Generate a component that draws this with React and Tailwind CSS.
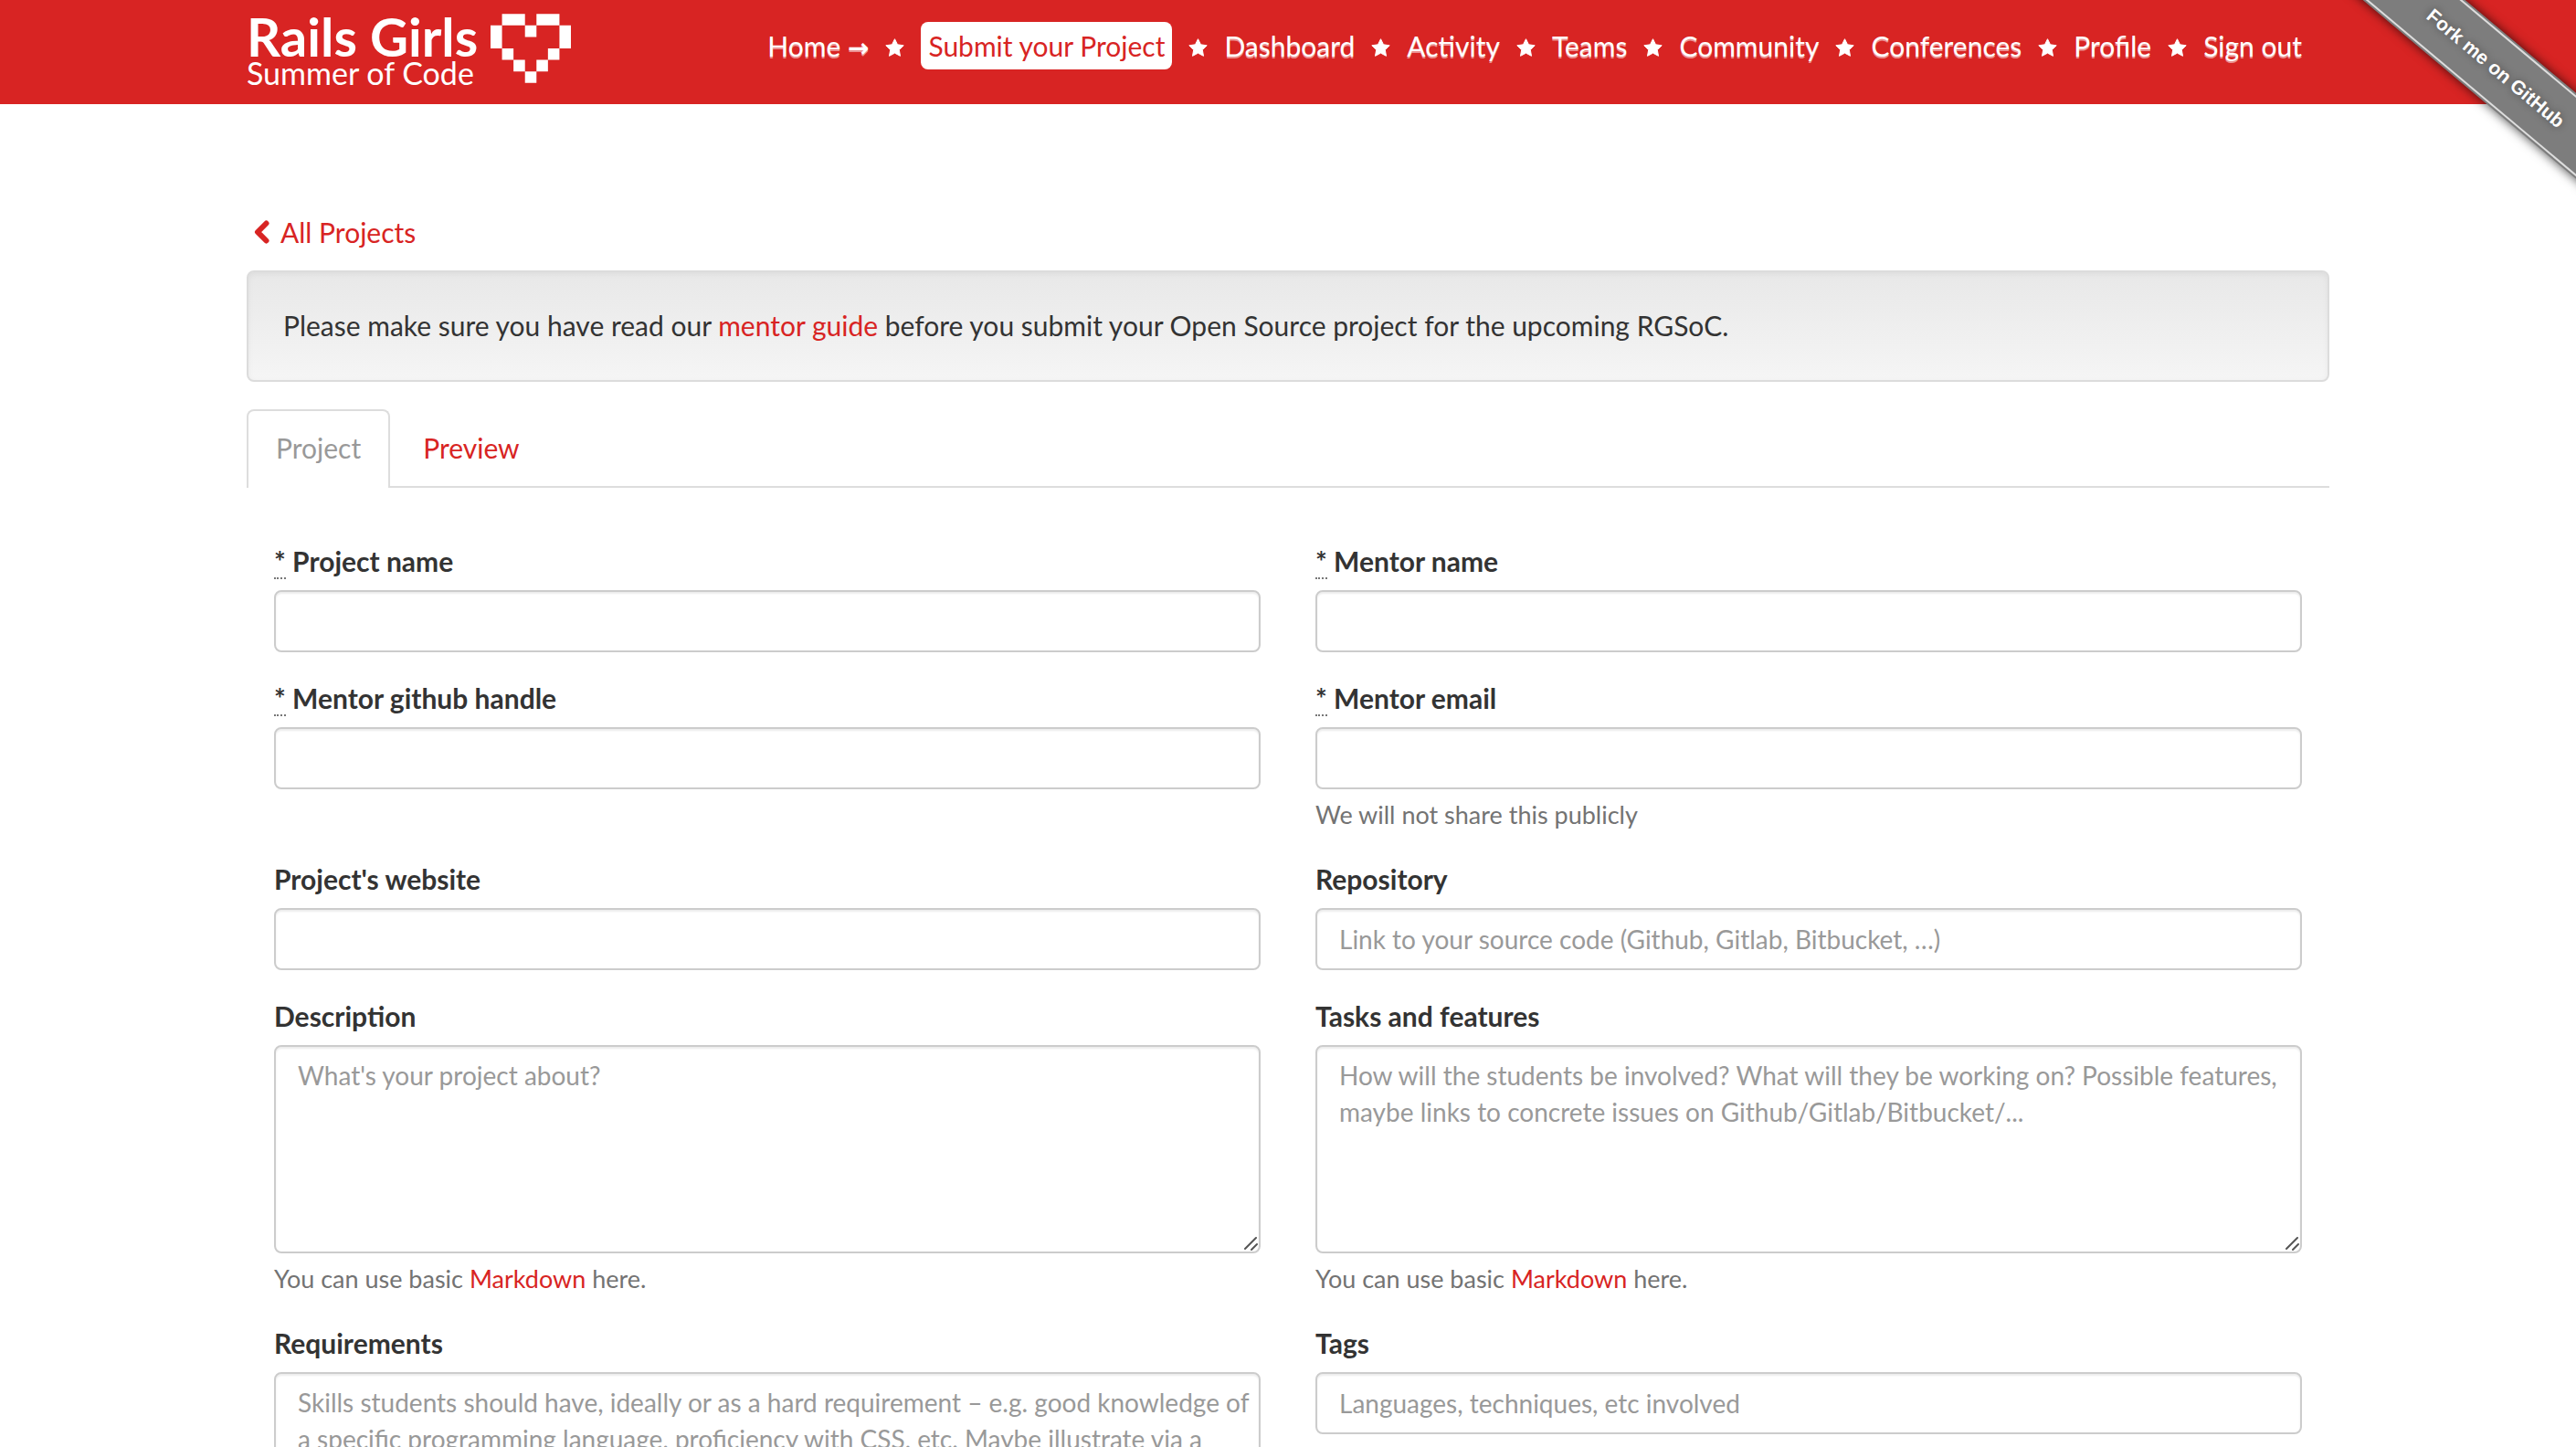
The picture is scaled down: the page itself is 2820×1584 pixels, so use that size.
import React, { Fragment } from "react";

const NAV = [
  "Home",
  "Submit your Project",
  "Dashboard",
  "Activity",
  "Teams",
  "Community",
  "Conferences",
  "Profile",
  "Sign out",
];

const LINK = "text-[#d82423] hover:underline";
const CONTROL =
  "block w-full rounded-lg border-2 border-[#cccccc] bg-white pl-6 pr-1 text-[28px] leading-[40px] text-[#555555] shadow-[inset_0_2px_2px_rgba(0,0,0,0.075)] placeholder:text-[#999999] placeholder:opacity-100 outline-none focus:border-[#66afe9]";

function Heart() {
  return (
    <svg viewBox="0 0 7 6" className="h-[76px] w-[88px]" fill="#fff" aria-hidden="true">
      <path d="M1 0h2v1H1zM4 0h2v1H4zM3 1h1v1H3zM0 1h1v2H0zM6 1h1v2H6zM1 3h1v1H1zM5 3h1v1H5zM2 4h1v1H2zM4 4h1v1H4zM3 5h1v1H3z" />
    </svg>
  );
}

function Star() {
  return (
    <svg viewBox="0 0 21 20" className="h-5 w-[21px] shrink-0" fill="#fff" stroke="#fff" strokeWidth="1" strokeLinejoin="round" aria-hidden="true">
      <path d="M10.5 .7l3 6.1 6.7 1-4.9 4.8 1.2 6.7-6-3.2-6 3.2 1.2-6.7L.8 7.8l6.7-1z" />
    </svg>
  );
}

function Header() {
  return (
    <header className="bg-[#d82423]">
      <div className="mx-auto flex max-w-[2340px] items-start justify-between px-[30px]">
        <a href="#home" className="flex gap-3.5 pt-[15px] text-white">
          <span className="block">
            <span className="block text-[58px] leading-[50px] font-bold">Rails Girls</span>
            <span className="block text-[34px] leading-[30px]">Summer of Code</span>
          </span>
          <Heart />
        </a>
        <nav aria-label="Main" className="flex h-[114px] items-start gap-[18px] pt-6 pr-[30px] leading-[42px]">
          {NAV.map((item, i) => (
            <Fragment key={item}>
              {i > 0 && (
                <span className="flex h-[52px] items-center pt-1">
                  <Star />
                </span>
              )}
              <a
                href="#nav"
                className={
                  i === 1
                    ? "rounded-lg bg-white px-2 py-[5px] whitespace-nowrap text-[#d82423]"
                    : "py-[5px] whitespace-nowrap text-white [text-shadow:0_2px_0_rgba(255,255,255,0.5)]"
                }
              >
                {item}
                {i === 0 && (
                  <>
                    {" "}
                    <span className="font-['DejaVu_Sans',sans-serif] text-[28px] font-bold">→</span>
                  </>
                )}
              </a>
            </Fragment>
          ))}
        </nav>
      </div>
    </header>
  );
}

function Ribbon() {
  return (
    <div className="pointer-events-none absolute top-0 right-0 h-[240px] w-[280px] overflow-hidden">
      <a
        href="#fork"
        className="pointer-events-auto absolute top-[39px] -right-[162px] block w-[500px] rotate-40 bg-[#7d7d7d] py-0.5 text-center font-['Liberation_Sans',Arial,sans-serif] text-[21px] font-bold text-white shadow-[0_0_12px_rgba(0,0,0,0.7)]"
      >
        <span className="block border-y-2 border-[#dedede] leading-[64px] [text-shadow:0_0_8px_rgba(0,0,0,0.4)]">
          Fork me on GitHub
        </span>
      </a>
    </div>
  );
}

function TextArea({ id, placeholder }) {
  return (
    <div className="relative">
      <textarea
        id={id}
        placeholder={placeholder}
        className={CONTROL + " h-[228px] resize-y py-[11px] [&::-webkit-resizer]:hidden"}
      />
      <svg viewBox="0 0 16 16" className="pointer-events-none absolute right-[3px] bottom-[3px] size-4" fill="none" stroke="#555" strokeWidth="2" strokeLinecap="round" aria-hidden="true">
        <path d="M2 14L14 2M9 15l6-6" />
      </svg>
    </div>
  );
}

function Field({ id, label, required, help, placeholder, multiline, type = "text" }) {
  return (
    <div className="mb-[30px]">
      <label htmlFor={id} className="mb-3 block font-bold">
        {required && (
          <>
            <abbr title="required" className="inline-block h-[40px] border-b-2 border-dotted border-[#777777] align-top no-underline">*</abbr>{" "}
          </>
        )}
        {label}
      </label>
      {multiline ? (
        <TextArea id={id} placeholder={placeholder} />
      ) : (
        <input id={id} type={type} placeholder={placeholder} className={CONTROL + " h-[68px]"} />
      )}
      {help && <p className="mt-2 text-[27px] leading-[40px] text-[#737373]">{help}</p>}
    </div>
  );
}

const markdownHelp = (
  <>
    You can use basic <a href="#markdown" className={LINK}>Markdown</a> here.
  </>
);

export default function App() {
  return (
    <div className="relative min-h-screen bg-white font-[Lato,sans-serif] text-[30px] leading-[40px] text-[#333333]">
      <Header />
      <Ribbon />
      <main className="mx-auto max-w-[2340px] px-[30px] pt-[120px]">
        <a href="#projects" className={"mb-[22px] ml-2 inline-flex items-center gap-3 align-top " + LINK}>
          <svg viewBox="0 0 17 26" className="h-[26px] w-[17px]" fill="none" stroke="currentColor" strokeWidth="6" strokeLinecap="round" strokeLinejoin="round" aria-hidden="true">
            <path d="M13.500 3.500L4 13l9.500 9.500" />
          </svg>
          All Projects
        </a>
        <div className="rounded-lg border-2 border-[#dcdcdc] bg-linear-to-b from-[#e8e8e8] to-[#f5f5f5] px-[38px] pt-[38px] pb-10 shadow-[inset_0_2px_6px_rgba(0,0,0,0.05)]">
          Please make sure you have read our <a href="#guide" className={LINK}>mentor guide</a> before you submit your
          Open Source project for the upcoming RGSoC.
        </div>
        <div role="tablist" className="mt-[30px] flex gap-1 border-b-2 border-[#dddddd]">
          <button type="button" role="tab" aria-selected="true" className="-mb-0.5 rounded-t-lg border-2 border-b-0 border-[#dddddd] bg-white px-[30px] pt-5 pb-6 text-[#999999]">
            Project
          </button>
          <button type="button" role="tab" aria-selected="false" className="px-8 pt-[22px] pb-[22px] text-[#d82423]">
            Preview
          </button>
        </div>
        <form className="px-[30px] pt-[60px]">
          <div className="grid grid-cols-2 gap-x-[60px]">
            <Field id="name" label="Project name" required />
            <Field id="mentor" label="Mentor name" required />
            <Field id="handle" label="Mentor github handle" required />
            <Field id="email" type="email" label="Mentor email" required help="We will not share this publicly" />
            <Field id="website" label="Project's website" />
            <Field id="repo" label="Repository" placeholder="Link to your source code (Github, Gitlab, Bitbucket, …)" />
            <Field id="description" label="Description" multiline placeholder="What's your project about?" help={markdownHelp} />
            <Field
              id="tasks"
              label="Tasks and features"
              multiline
              placeholder="How will the students be involved? What will they be working on? Possible features, maybe links to concrete issues on Github/Gitlab/Bitbucket/..."
              help={markdownHelp}
            />
            <Field
              id="requirements"
              label="Requirements"
              multiline
              placeholder="Skills students should have, ideally or as a hard requirement – e.g. good knowledge of a specific programming language, proficiency with CSS, etc. Maybe illustrate via a"
            />
            <Field id="tags" label="Tags" placeholder="Languages, techniques, etc involved" />
          </div>
        </form>
      </main>
    </div>
  );
}
